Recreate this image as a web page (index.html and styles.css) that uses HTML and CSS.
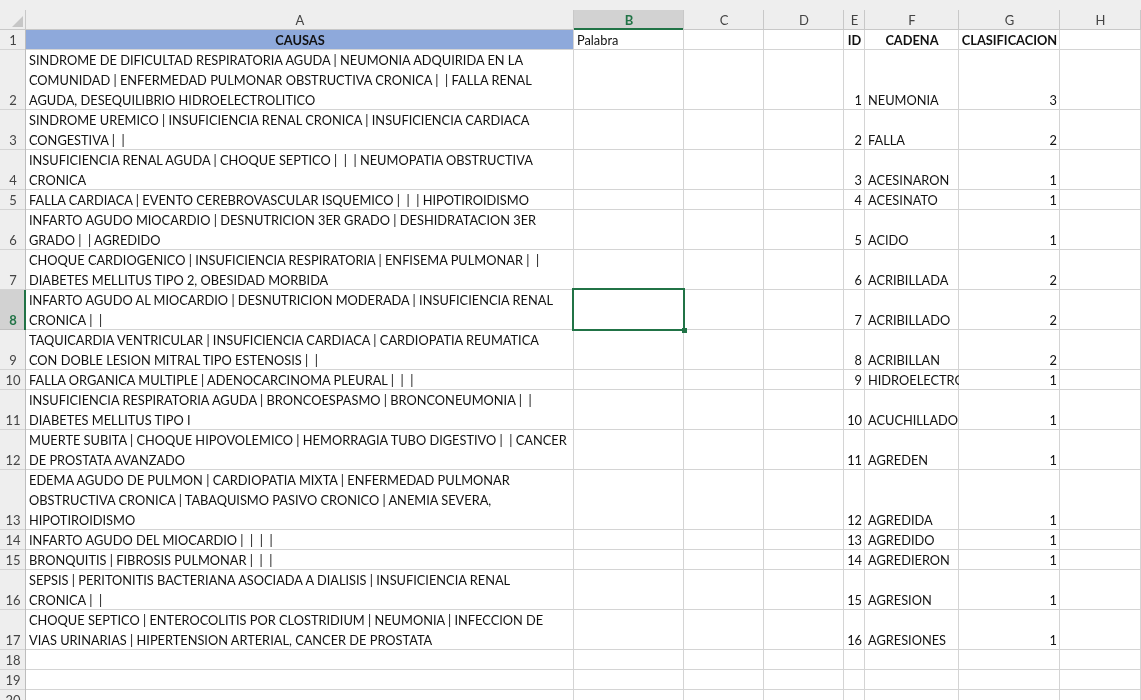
FILE: index.html
```html
<!DOCTYPE html>
<html>
<head>
<meta charset="utf-8">
<link rel="stylesheet" href="styles.css">
</head>
<body>
<div class="sheet">
  <div class="topstrip"></div>
  <div class="row colhead">
    <div class="cell corner"><span class="tri"></span></div>
    <div class="cell">A</div>
    <div class="cell sel">B</div>
    <div class="cell">C</div>
    <div class="cell">D</div>
    <div class="cell">E</div>
    <div class="cell">F</div>
    <div class="cell">G</div>
    <div class="cell">H</div>
  </div>

  <div class="row l1">
    <div class="cell rh">1</div>
    <div class="cell a head blue">CAUSAS</div>
    <div class="cell">Palabra</div>
    <div class="cell"></div>
    <div class="cell"></div>
    <div class="cell head">ID</div>
    <div class="cell head">CADENA</div>
    <div class="cell head">CLASIFICACION</div>
    <div class="cell"></div>
  </div>

  <div class="row l3">
    <div class="cell rh">2</div>
    <div class="cell a"><div class="txt">SINDROME DE DIFICULTAD RESPIRATORIA AGUDA | NEUMONIA ADQUIRIDA EN LA<br>COMUNIDAD | ENFERMEDAD PULMONAR OBSTRUCTIVA CRONICA |  | FALLA RENAL<br>AGUDA, DESEQUILIBRIO HIDROELECTROLITICO</div></div>
    <div class="cell"></div><div class="cell"></div><div class="cell"></div>
    <div class="cell num">1</div><div class="cell">NEUMONIA</div><div class="cell num">3</div><div class="cell"></div>
  </div>

  <div class="row l2">
    <div class="cell rh">3</div>
    <div class="cell a"><div class="txt">SINDROME UREMICO | INSUFICIENCIA RENAL CRONICA | INSUFICIENCIA CARDIACA<br>CONGESTIVA |  |</div></div>
    <div class="cell"></div><div class="cell"></div><div class="cell"></div>
    <div class="cell num">2</div><div class="cell">FALLA</div><div class="cell num">2</div><div class="cell"></div>
  </div>

  <div class="row l2">
    <div class="cell rh">4</div>
    <div class="cell a"><div class="txt">INSUFICIENCIA RENAL AGUDA | CHOQUE SEPTICO |  |  | NEUMOPATIA OBSTRUCTIVA<br>CRONICA</div></div>
    <div class="cell"></div><div class="cell"></div><div class="cell"></div>
    <div class="cell num">3</div><div class="cell">ACESINARON</div><div class="cell num">1</div><div class="cell"></div>
  </div>

  <div class="row l1">
    <div class="cell rh">5</div>
    <div class="cell a"><div class="txt">FALLA CARDIACA | EVENTO CEREBROVASCULAR ISQUEMICO |  |  | HIPOTIROIDISMO</div></div>
    <div class="cell"></div><div class="cell"></div><div class="cell"></div>
    <div class="cell num">4</div><div class="cell">ACESINATO</div><div class="cell num">1</div><div class="cell"></div>
  </div>

  <div class="row l2">
    <div class="cell rh">6</div>
    <div class="cell a"><div class="txt">INFARTO AGUDO MIOCARDIO | DESNUTRICION 3ER GRADO | DESHIDRATACION 3ER<br>GRADO |  | AGREDIDO</div></div>
    <div class="cell"></div><div class="cell"></div><div class="cell"></div>
    <div class="cell num">5</div><div class="cell">ACIDO</div><div class="cell num">1</div><div class="cell"></div>
  </div>

  <div class="row l2">
    <div class="cell rh">7</div>
    <div class="cell a"><div class="txt">CHOQUE CARDIOGENICO | INSUFICIENCIA RESPIRATORIA | ENFISEMA PULMONAR |  |<br>DIABETES MELLITUS TIPO 2, OBESIDAD MORBIDA</div></div>
    <div class="cell"></div><div class="cell"></div><div class="cell"></div>
    <div class="cell num">6</div><div class="cell">ACRIBILLADA</div><div class="cell num">2</div><div class="cell"></div>
  </div>

  <div class="row l2">
    <div class="cell rh selrow">8</div>
    <div class="cell a"><div class="txt">INFARTO AGUDO AL MIOCARDIO | DESNUTRICION MODERADA | INSUFICIENCIA RENAL<br>CRONICA |  |</div></div>
    <div class="cell active"><span class="cursor"><span class="handle"></span></span></div><div class="cell"></div><div class="cell"></div>
    <div class="cell num">7</div><div class="cell">ACRIBILLADO</div><div class="cell num">2</div><div class="cell"></div>
  </div>

  <div class="row l2">
    <div class="cell rh">9</div>
    <div class="cell a"><div class="txt">TAQUICARDIA VENTRICULAR | INSUFICIENCIA CARDIACA | CARDIOPATIA REUMATICA<br>CON DOBLE LESION MITRAL TIPO ESTENOSIS |  |</div></div>
    <div class="cell"></div><div class="cell"></div><div class="cell"></div>
    <div class="cell num">8</div><div class="cell">ACRIBILLAN</div><div class="cell num">2</div><div class="cell"></div>
  </div>

  <div class="row l1">
    <div class="cell rh">10</div>
    <div class="cell a"><div class="txt">FALLA ORGANICA MULTIPLE | ADENOCARCINOMA PLEURAL |  |  |</div></div>
    <div class="cell"></div><div class="cell"></div><div class="cell"></div>
    <div class="cell num">9</div><div class="cell">HIDROELECTRO</div><div class="cell num">1</div><div class="cell"></div>
  </div>

  <div class="row l2">
    <div class="cell rh">11</div>
    <div class="cell a"><div class="txt">INSUFICIENCIA RESPIRATORIA AGUDA | BRONCOESPASMO | BRONCONEUMONIA |  |<br>DIABETES MELLITUS TIPO I</div></div>
    <div class="cell"></div><div class="cell"></div><div class="cell"></div>
    <div class="cell num">10</div><div class="cell">ACUCHILLADO</div><div class="cell num">1</div><div class="cell"></div>
  </div>

  <div class="row l2">
    <div class="cell rh">12</div>
    <div class="cell a"><div class="txt">MUERTE SUBITA | CHOQUE HIPOVOLEMICO | HEMORRAGIA TUBO DIGESTIVO |  | CANCER<br>DE PROSTATA AVANZADO</div></div>
    <div class="cell"></div><div class="cell"></div><div class="cell"></div>
    <div class="cell num">11</div><div class="cell">AGREDEN</div><div class="cell num">1</div><div class="cell"></div>
  </div>

  <div class="row l3">
    <div class="cell rh">13</div>
    <div class="cell a"><div class="txt">EDEMA AGUDO DE PULMON | CARDIOPATIA MIXTA | ENFERMEDAD PULMONAR<br>OBSTRUCTIVA CRONICA | TABAQUISMO PASIVO CRONICO | ANEMIA SEVERA,<br>HIPOTIROIDISMO</div></div>
    <div class="cell"></div><div class="cell"></div><div class="cell"></div>
    <div class="cell num">12</div><div class="cell">AGREDIDA</div><div class="cell num">1</div><div class="cell"></div>
  </div>

  <div class="row l1">
    <div class="cell rh">14</div>
    <div class="cell a"><div class="txt">INFARTO AGUDO DEL MIOCARDIO |  |  |  |</div></div>
    <div class="cell"></div><div class="cell"></div><div class="cell"></div>
    <div class="cell num">13</div><div class="cell">AGREDIDO</div><div class="cell num">1</div><div class="cell"></div>
  </div>

  <div class="row l1">
    <div class="cell rh">15</div>
    <div class="cell a"><div class="txt">BRONQUITIS | FIBROSIS PULMONAR |  |  |</div></div>
    <div class="cell"></div><div class="cell"></div><div class="cell"></div>
    <div class="cell num">14</div><div class="cell">AGREDIERON</div><div class="cell num">1</div><div class="cell"></div>
  </div>

  <div class="row l2">
    <div class="cell rh">16</div>
    <div class="cell a"><div class="txt">SEPSIS | PERITONITIS BACTERIANA ASOCIADA A DIALISIS | INSUFICIENCIA RENAL<br>CRONICA |  |</div></div>
    <div class="cell"></div><div class="cell"></div><div class="cell"></div>
    <div class="cell num">15</div><div class="cell">AGRESION</div><div class="cell num">1</div><div class="cell"></div>
  </div>

  <div class="row l2">
    <div class="cell rh">17</div>
    <div class="cell a"><div class="txt">CHOQUE SEPTICO | ENTEROCOLITIS POR CLOSTRIDIUM | NEUMONIA | INFECCION DE<br>VIAS URINARIAS | HIPERTENSION ARTERIAL, CANCER DE PROSTATA</div></div>
    <div class="cell"></div><div class="cell"></div><div class="cell"></div>
    <div class="cell num">16</div><div class="cell">AGRESIONES</div><div class="cell num">1</div><div class="cell"></div>
  </div>

  <div class="row l1">
    <div class="cell rh">18</div>
    <div class="cell a"></div><div class="cell"></div><div class="cell"></div><div class="cell"></div>
    <div class="cell"></div><div class="cell"></div><div class="cell"></div><div class="cell"></div>
  </div>
  <div class="row l1">
    <div class="cell rh">19</div>
    <div class="cell a"></div><div class="cell"></div><div class="cell"></div><div class="cell"></div>
    <div class="cell"></div><div class="cell"></div><div class="cell"></div><div class="cell"></div>
  </div>
  <div class="row l1">
    <div class="cell rh">20</div>
    <div class="cell a"></div><div class="cell"></div><div class="cell"></div><div class="cell"></div>
    <div class="cell"></div><div class="cell"></div><div class="cell"></div><div class="cell"></div>
  </div>
</div>
</body>
</html>
```

FILE: styles.css
```css
html, body {
  margin: 0;
  padding: 0;
  background: #ffffff;
}

.sheet {
  width: 1141px;
  height: 700px;
  overflow: hidden;
  font-family: Lato, "Liberation Sans", sans-serif;
  font-size: 12.8px;
  color: #111111;
  will-change: transform;
  -webkit-font-smoothing: antialiased;
}

.topstrip {
  height: 10px;
  background: #eeeeee;
}

.row {
  display: grid;
  grid-template-columns: 26px 548px 110px 80px 80px 21px 94px 101px 81px;
}

.row.l1 { height: 20px; }
.row.l2 { height: 40px; }
.row.l3 { height: 60px; }

.cell {
  box-sizing: border-box;
  box-shadow: inset -1px -1px 0 #d4d4d4;
  display: flex;
  align-items: flex-end;
  line-height: 20px;
  padding: 0 3px 0 3px;
  white-space: pre;
  overflow: hidden;
  position: relative;
}

.colhead {
  height: 20px;
  background: #eeeeee;
}

.colhead .cell {
  justify-content: center;
  align-items: center;
  color: #444444;
  box-shadow: inset -1px -1px 0 #c8c8c8;
  padding: 0;
  font-size: 13px;
}

.colhead .cell.sel {
  background: #d2d2d2;
  color: #217346;
  font-weight: bold;
  box-shadow: inset -1px 0 0 #c8c8c8, inset 0 -2px 0 #217346;
}

.corner {
  position: relative;
}

.tri {
  position: absolute;
  right: 3px;
  bottom: 3px;
  width: 0;
  height: 0;
  border-left: 11px solid transparent;
  border-bottom: 11px solid #c6c6c6;
}

.rh {
  background: #eeeeee;
  color: #444444;
  padding: 0;
  justify-content: center;
  box-shadow: inset -1px 0 0 #bdbdbd, inset 0 -1px 0 #d4d4d4;
  font-size: 13px;
}

.rh.selrow {
  background: #d2d2d2;
  color: #217346;
  font-weight: bold;
  box-shadow: inset -2px 0 0 #217346, inset 0 -1px 0 #c0c0c0;
}

.head {
  font-weight: bold;
  justify-content: center;
  padding: 0;
}

.blue {
  background: #8ea9db;
}

.num {
  justify-content: flex-end;
  padding-right: 3px;
}

.active {
  overflow: visible;
}

.cursor {
  position: absolute;
  left: -2px;
  top: -2px;
  right: -1px;
  bottom: -1px;
  border: 2px solid #217346;
  z-index: 2;
}

.handle {
  position: absolute;
  right: -4px;
  bottom: -4px;
  width: 5px;
  height: 5px;
  background: #217346;
}
```
